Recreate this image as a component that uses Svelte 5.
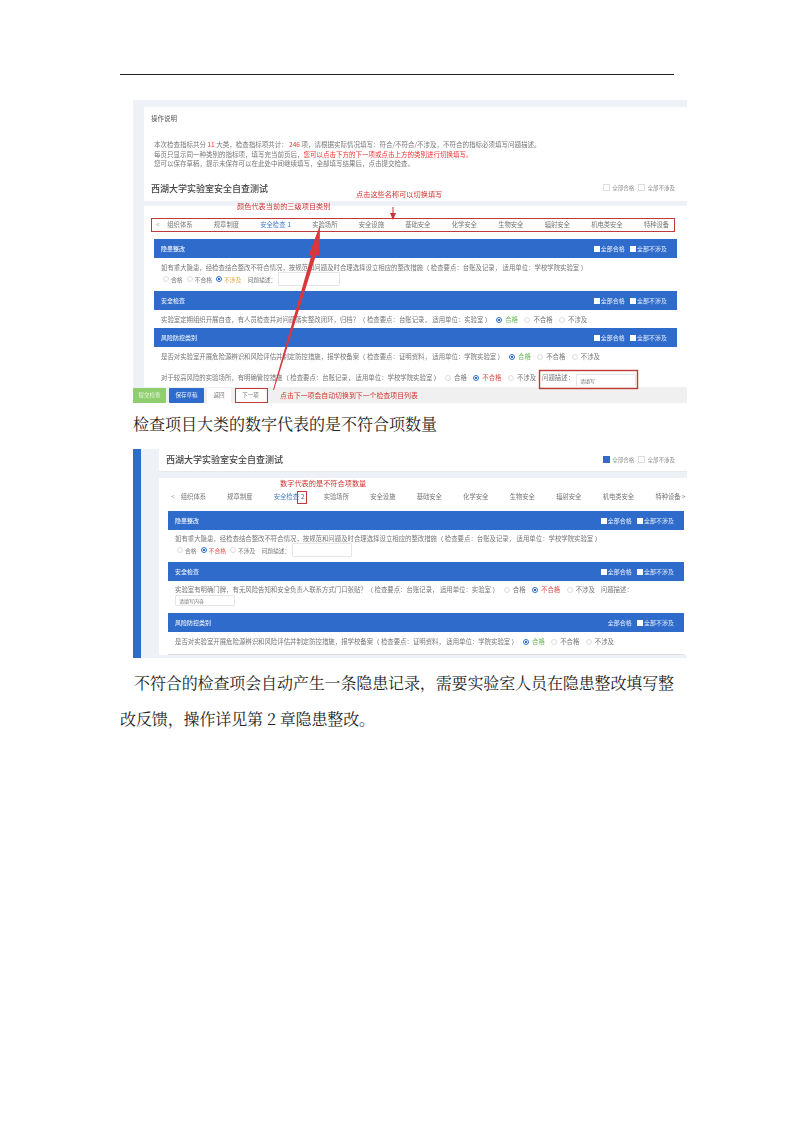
<script>
	const tabs1 = ['组织体系', '规章制度', '安全检查', '实验场所', '安全设施', '基础安全', '化学安全', '生物安全', '辐射安全', '机电类安全', '特种设备'];
	const tabs2 = ['组织体系', '规章制度', '安全检查', '实验场所', '安全设施', '基础安全', '化学安全', '生物安全', '辐射安全', '机电类安全', '特种设备 >'];
</script>

{#snippet head(title, checked = false)}
	<div class="head">
		<span>{title}</span>
		<span class="head-actions">
			<i class="box" class:done={checked}></i>全部合格
			<i class="box"></i>全部不涉及
		</span>
	</div>
{/snippet}

{#snippet radios(picked)}
	<span class="radio" class:on={picked === 'ok'}></span><span class:ok={picked === 'ok'}>合格</span>
	<span class="radio" class:on={picked === 'bad'}></span><span class:bad={picked === 'bad'}>不合格</span>
	<span class="radio" class:on={picked === 'na'}></span><span class:na={picked === 'na'}>不涉及</span>
{/snippet}

<div class="page">
	<div class="rule"></div>

	<div class="shot first">
		<div class="intro">
			<div class="intro-title">操作说明</div>
			<p>本次检查指标共分 <b>11</b> 大类，检查指标项共计： <b>246</b> 项，请根据实际情况填写：符合/不符合/不涉及，不符合的指标必须填写问题描述。</p>
			<p>每页只显示同一种类别的指标项，填写完当前页后，<b>您可以点击下方的下一项或点击上方的类别进行切换填写。</b></p>
			<p>您可以保存草稿，提示未保存可以在此处中间继续填写，全部填写结果后，点击提交检查。</p>
			<div class="title-row">
				<h2>西湖大学实验室安全自查测试</h2>
				<span class="all"><i class="check"></i>全部合格 <i class="check"></i>全部不涉及</span>
			</div>
		</div>
		<div class="main">
			<div class="tabs one">
				<span class="chev">&lt;</span>
				{#each tabs1 as t, i}
					<span class:current={i === 2}>{t}{#if i === 2}<em>1</em>{/if}</span>
				{/each}
			</div>
			{@render head('隐患整改')}
			<div class="q">
				<div>如有重大隐患，经检查结合整改不符合情况，按规范和问题及时合理选择设立相应的整改措施（ 检查要点：台账及记录， 适用单位：学校学院实验室 ）</div>
				<div class="answers">{@render radios('na')}<span class="lbl">问题描述：</span><span class="field w62"></span></div>
			</div>
			{@render head('安全检查')}
			<div class="q one-line">
				<div>实验室定期组织开展自查，有人员检查并对问题落实整改闭环，归档？（ 检查要点：台账记录， 适用单位：实验室 ）{@render radios('ok')}</div>
			</div>
			{@render head('风险防控类别')}
			<div class="q two">
				<div>是否对实验室开展危险源辨识和风险评估并制定防控措施，报学校备案（ 检查要点：证明资料， 适用单位：学院实验室 ）{@render radios('ok')}</div>
				<div class="low">对于较高风险的实验场所，有明确管控措施（ 检查要点：台账记录， 适用单位：学校学院实验室 ）{@render radios('bad')}<span class="lbl">问题描述：</span><span class="field w60 inline">请填写</span></div>
			</div>
		</div>
		<div class="foot">
			<span class="btn green">提交检查</span>
			<span class="btn blue">保存草稿</span>
			<span class="btn white w24">返回</span>
			<span class="btn white w33">下一项</span>
		</div>

		<svg class="marks" viewBox="0 0 554 303" width="554" height="303">
			<rect x="18.5" y="118.5" width="523" height="13" fill="none" stroke="#c0393b" />
			<rect x="102.5" y="288.5" width="32" height="14" fill="none" stroke="#c0393b" />
			<rect x="406.5" y="270.5" width="98" height="18" fill="none" stroke="#c0393b" stroke-width="1.4" />
			<path d="M140 290 L178.5 155 L175.5 156 L187 125 L186.5 156 L183 155 L141 290 Z" fill="#d9363e" />
			<path d="M260 107 V118" stroke="#c0393b" stroke-width="1" />
			<path d="M257 113 L260 120 L263 113 Z" fill="#c0393b" />
		</svg>
		<span class="note n1">点击这些名称可以切换填写</span>
		<span class="note n2">颜色代表当前的三级项目类别</span>
		<span class="note n3">点击下一项会自动切换到下一个检查项目列表</span>
	</div>

	<p class="caption">检查项目大类的数字代表的是不符合项数量</p>

	<div class="shot second">
		<div class="side"></div>
		<div class="body">
			<div class="title-card">
				<h2>西湖大学实验室安全自查测试</h2>
				<span class="all"><i class="check on"></i>全部合格 <i class="check"></i>全部不涉及</span>
			</div>
			<div class="main two-main">
				<div class="tabs">
					<span class="chev">&lt;</span>
					{#each tabs2 as t, i}
						<span class:current={i === 2}>{t}{#if i === 2}<em>2</em>{/if}</span>
					{/each}
				</div>
				{@render head('隐患整改')}
				<div class="q short">
					<div>如有重大隐患，经检查结合整改不符合情况，按规范和问题及时合理选择设立相应的整改措施（ 检查要点：台账及记录， 适用单位：学校学院实验室 ）</div>
					<div class="answers">{@render radios('bad')}<span class="lbl">问题描述：</span><span class="field w60 tall"></span></div>
				</div>
				{@render head('安全检查')}
				<div class="q mid">
					<div>实验室有明确门牌，有无风险告知和安全负责人联系方式门口张贴？（ 检查要点：台账记录， 适用单位：实验室 ）{@render radios('bad')}<span class="lbl">问题描述：</span></div>
					<span class="field w60 block">请填写内容</span>
				</div>
				{@render head('风险防控类别', true)}
				<div class="q last">
					<div>是否对实验室开展危险源辨识和风险评估并制定防控措施，报学校备案（ 检查要点：证明资料， 适用单位：学院实验室 ）{@render radios('ok')}</div>
				</div>
			</div>
		</div>

		<svg class="marks" viewBox="0 0 554 209" width="554" height="209">
			<rect x="164.5" y="42.5" width="9" height="12" fill="none" stroke="#c0393b" />
		</svg>
		<span class="note n4">数字代表的是不符合项数量</span>
	</div>

	<p class="para">不符合的检查项会自动产生一条隐患记录，需要实验室人员在隐患整改填写整<br />改反馈，操作详见第 2 章隐患整改。</p>
</div>

<style>
	:global(body) {
		margin: 0;
		background: #fff;
	}

	.page {
		width: 793px;
		height: 1122px;
		box-sizing: border-box;
		padding: 74px 119px 0 120px;
		font-family: "Noto Serif CJK SC", "Noto Sans CJK SC", serif;
		color: #222;
	}

	.rule {
		height: 1px;
		background: #222;
	}

	.shot {
		position: relative;
		width: 554px;
		margin-left: 13px;
		background: #eef2f7;
		font-family: "Noto Sans CJK SC", sans-serif;
		font-size: 6.4px;
		line-height: 9px;
		color: #777;
	}

	.shot > :not(.marks):not(.note) {
		filter: blur(0.45px);
	}

	.first {
		height: 303px;
		margin-top: 25px;
		padding-top: 7px;
		box-sizing: border-box;
		display: flex;
		flex-direction: column;
	}

	.intro {
		margin-left: 11px;
		height: 94px;
		box-sizing: border-box;
		padding: 7px 12px 0 7px;
		background: #fff;
	}

	.intro-title {
		font-size: 6.5px;
		color: #555;
		margin-bottom: 17px;
	}

	.intro p {
		margin: 0 0 0 3px;
		font-size: 6.5px;
		line-height: 9.5px;
		white-space: nowrap;
	}

	.intro p b {
		color: #e33;
		font-weight: 400;
	}

	.title-row {
		display: flex;
		justify-content: space-between;
		align-items: center;
		margin-top: 14px;
	}

	h2 {
		margin: 0;
		font-size: 9px;
		font-weight: 500;
		color: #444;
		line-height: 12px;
	}

	.all {
		font-size: 5.5px;
		color: #888;
	}

	.check {
		display: inline-block;
		width: 5px;
		height: 5px;
		border: 1px solid #ddd;
		margin: 0 2px 0 3px;
		vertical-align: -1px;
	}

	.check.on {
		background: #2f6bcb;
		border-color: #2f6bcb;
	}

	.main {
		margin: 5px 0 0 11px;
		height: 181px;
		box-sizing: border-box;
		padding: 11px 10px 0;
		background: #fff;
	}

	.tabs {
		display: flex;
		gap: 21.3px;
		align-items: center;
		height: 22px;
		padding: 0 0 0 3px;
		white-space: nowrap;
		font-size: 6.3px;
		color: #777;
	}

	.tabs.one {
		height: 13px;
		margin: 1px 0 8px -1px;
	}

	.chev {
		color: #999;
		margin-right: -15px;
		width: 9px;
	}

	.tabs.one .chev {
		margin-right: -19px;
	}

	.current {
		color: #4a7fc9;
	}

	.current em {
		font-style: normal;
		color: #2f6bcb;
		margin-left: 2px;
	}

	.two-main .current em {
		margin-right: -2px;
	}

	.head {
		display: flex;
		justify-content: space-between;
		align-items: center;
		height: 19px;
		padding: 0 10px 0 7px;
		background: #2f6bcb;
		color: #e9f0fb;
		font-size: 6px;
		font-weight: 500;
	}

	.head-actions {
		font-weight: 400;
	}

	.box {
		display: inline-block;
		width: 6px;
		height: 6px;
		margin: 0 1px 0 4px;
		background: #fff;
		vertical-align: -1px;
	}

	.box.done {
		background: none;
	}

	.q {
		height: 33px;
		padding: 5px 0 0 7px;
		box-sizing: border-box;
		white-space: nowrap;
		overflow: hidden;
	}

	.q.one-line {
		height: 18px;
	}

	.q.two {
		height: 39px;
	}

	.low {
		margin-top: 12px;
	}

	.answers {
		display: flex;
		align-items: center;
		margin-top: 1px;
		height: 12px;
		font-size: 5.8px;
		margin-left: 2px;
	}

	.radio {
		display: inline-block;
		box-sizing: border-box;
		flex: none;
		width: 6px;
		height: 6px;
		border: 1px solid #ddd;
		border-radius: 50%;
		margin: 0 3px 0 5px;
		vertical-align: -1px;
	}

	.answers .radio {
		margin: 0 2px 0 4px;
	}

	.answers .radio:first-child {
		margin-left: 0;
	}

	.radio.on {
		border: 1px solid #2f6bcb;
		background: radial-gradient(circle, #2f6bcb 45%, #fff 55%);
	}

	.ok {
		color: #6cb65b;
	}

	.bad {
		color: #d9534f;
	}

	.na {
		color: #e8a63a;
	}

	.lbl {
		margin-left: 6px;
	}

	.field {
		display: inline-block;
		box-sizing: border-box;
		flex: none;
		height: 13px;
		border: 1px solid #e6e6e6;
		border-radius: 1px;
		margin-left: 2px;
		padding-left: 3px;
		vertical-align: middle;
		font-size: 5px;
		line-height: 11px;
	}

	.w62 {
		width: 62px;
		height: 14px;
	}

	.w60 {
		width: 60px;
	}

	.field.inline {
		vertical-align: -3px;
	}

	.foot {
		height: 16px;
		margin-top: auto;
		display: flex;
		align-items: center;
		background: #f0f0f0;
		font-size: 5.5px;
	}

	.btn {
		display: flex;
		align-items: center;
		justify-content: center;
		height: 15px;
		width: 33px;
		margin-right: 3px;
		border-radius: 1px;
		background: #fff;
	}

	.green {
		background: #8fce6e;
		color: #eaf7e3;
	}

	.blue {
		width: 35px;
		background: #2f6bcb;
		color: #e9f0fb;
	}

	.w24 {
		width: 24px;
	}

	.w33 {
		width: 31px;
		margin-left: 1px;
	}

	.marks {
		position: absolute;
		left: 0;
		top: 0;
	}

	.note {
		position: absolute;
		color: #d0342f;
		white-space: nowrap;
		font-size: 7.2px;
		line-height: 9px;
		filter: blur(0.35px);
	}

	.n1 {
		left: 223px;
		top: 90px;
	}

	.n2 {
		left: 104px;
		top: 102px;
	}

	.n3 {
		left: 147px;
		top: 291px;
		font-size: 6.9px;
	}

	.n4 {
		left: 147px;
		top: 30px;
	}

	.caption {
		margin: 10px 0 0 13px;
		height: 36px;
		font-size: 16px;
		line-height: 21px;
		white-space: nowrap;
	}

	.second {
		height: 209px;
		display: flex;
	}

	.side {
		width: 8px;
		background: #2f6bcb;
	}

	.body {
		flex: 1;
		min-width: 0;
		padding-left: 18px;
		display: flex;
		flex-direction: column;
	}

	.title-card {
		display: flex;
		justify-content: space-between;
		align-items: center;
		height: 23px;
		padding: 0 12px 0 7px;
		background: #fff;
		border-bottom: 1px solid #e8e8e8;
		box-sizing: border-box;
	}

	.main.two-main {
		margin: 6px 0 0;
		height: 177px;
		padding: 4px 3px 0 9px;
	}

	.two-main .tabs {
		height: 29px;
	}

	.q.short {
		height: 32px;
		padding-top: 4px;
	}

	.q.mid {
		height: 32px;
		padding-top: 4px;
	}

	.q.last {
		height: 23px;
		padding-top: 5px;
		border-bottom: 1px solid #ddd;
	}

	.field.tall {
		height: 14px;
	}

	.field.block {
		display: block;
		margin: 1px 0 0;
		height: 11px;
		line-height: 9px;
	}

	.para {
		margin: 7px 0 0;
		font-size: 16px;
		line-height: 36px;
		text-indent: 14px;
		letter-spacing: -0.12px;
		white-space: nowrap;
	}
</style>
